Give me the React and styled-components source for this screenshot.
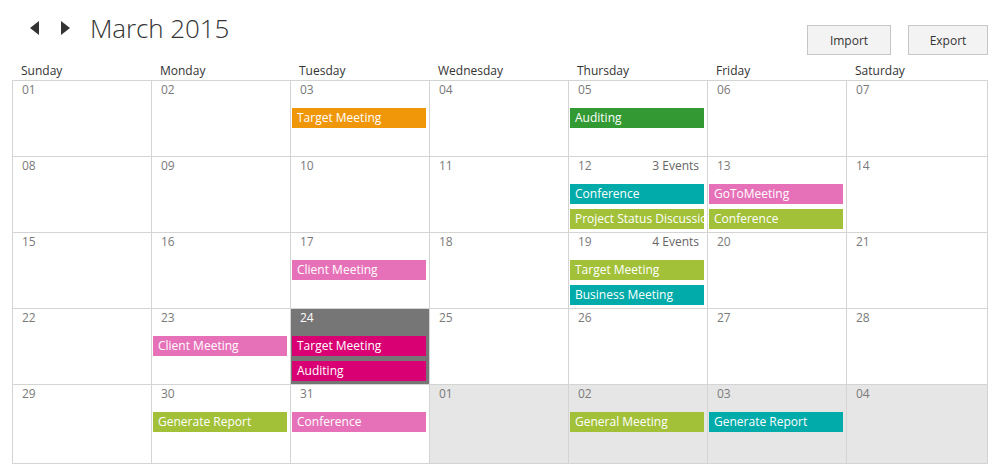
import React from "react"
import styled, { createGlobalStyle } from "styled-components"

const GlobalStyle = createGlobalStyle`
  body {
    margin: 0;
    background: #ffffff;
    font-family: "Open Sans", "Liberation Sans", sans-serif;
  }
`

const colors = {
  orange: "#f09609",
  green: "#339933",
  teal: "#00aba9",
  pink: "#e671b8",
  lime: "#a2c139",
  magenta: "#d80073",
}

const Page = styled.div`
  width: 976px;
  padding-left: 12px;
`

const TopBar = styled.div`
  display: flex;
  justify-content: space-between;
  height: 62px;
`

const TitleBlock = styled.div`
  display: flex;
  align-items: center;
  height: 56px;
  padding-left: 17px;
`

const Arrow = styled.button`
  width: 12px;
  height: 16px;
  padding: 0;
  margin-right: 18px;
  border: none;
  background: none;
  display: flex;
  align-items: center;
  justify-content: center;
  cursor: pointer;
`

const Title = styled.h1`
  margin: 0 0 0 1px;
  font-family: "Open Sans", sans-serif;
  font-weight: 300;
  font-size: 26px;
  letter-spacing: -0.1px;
  color: #333333;
`

const Actions = styled.div`
  display: flex;
  gap: 17px;
  align-self: flex-end;
  margin-bottom: 7px;
`

const Button = styled.button`
  width: ${(p) => p.w}px;
  height: 30px;
  border: 1px solid #c6c6c6;
  background: #f3f3f3;
  color: #333333;
  font-family: "Open Sans", sans-serif;
  font-size: 12px;
  cursor: pointer;
`

const DayNames = styled.div`
  display: grid;
  grid-template-columns: repeat(6, 139px) 1fr;
  height: 18px;
`

const DayName = styled.div`
  padding: 1px 0 0 9px;
  font-size: 12px;
  line-height: 16px;
  color: #333333;
`

const Grid = styled.div`
  display: grid;
  grid-template-columns: repeat(6, 139px) 1fr;
  grid-template-rows: repeat(4, 76px) 79px;
  border-top: 1px solid #d4d4d4;
  border-left: 1px solid #d4d4d4;
`

const Cell = styled.div`
  box-sizing: border-box;
  border-right: 1px solid #d4d4d4;
  border-bottom: 1px solid #d4d4d4;
  background: ${(p) => (p.today ? "#767676" : p.other ? "#e6e6e6" : "#ffffff")};
  overflow: hidden;
`

const CellHead = styled.div`
  display: flex;
  justify-content: space-between;
  height: 27px;
  box-sizing: border-box;
  padding: 1px 8px 0 9px;
  font-size: 12px;
  line-height: 16px;
  color: ${(p) => (p.today ? "#ffffff" : "#7a7a7a")};
`

const More = styled.span`
  color: #666666;
`

const EventList = styled.div`
  display: flex;
  flex-direction: column;
  gap: 5px;
  padding-left: 1px;
`

const Event = styled.div`
  width: 134px;
  height: 20px;
  box-sizing: border-box;
  padding-left: 5px;
  background: ${(p) => p.color};
  color: #ffffff;
  font-size: 12px;
  line-height: 20px;
  white-space: nowrap;
  overflow: hidden;
`

const days = ["Sunday", "Monday", "Tuesday", "Wednesday", "Thursday", "Friday", "Saturday"]

const events = {
  3: [["Target Meeting", colors.orange]],
  5: [["Auditing", colors.green]],
  12: [["Conference", colors.teal], ["Project Status Discussion", colors.lime]],
  13: [["GoToMeeting", colors.pink], ["Conference", colors.lime]],
  17: [["Client Meeting", colors.pink]],
  19: [["Target Meeting", colors.lime], ["Business Meeting", colors.teal]],
  23: [["Client Meeting", colors.pink]],
  24: [["Target Meeting", colors.magenta], ["Auditing", colors.magenta]],
  30: [["Generate Report", colors.lime]],
  31: [["Conference", colors.pink]],
  "n2": [["General Meeting", colors.lime]],
  "n3": [["Generate Report", colors.teal]],
}

const more = { 12: "3 Events", 19: "4 Events" }

const cells = []
for (let d = 1; d <= 31; d++) cells.push({ key: d, label: String(d).padStart(2, "0") })
for (let d = 1; d <= 4; d++) cells.push({ key: "n" + d, label: "0" + d, other: true })

const Triangle = ({ dir }) => (
  <svg width="10" height="14" viewBox="0 0 10 14">
    {dir === "left" ? (
      <path d="M9 0 L9 14 L0 7 Z" fill="#333333" />
    ) : (
      <path d="M1 0 L1 14 L10 7 Z" fill="#333333" />
    )}
  </svg>
)

const App = () => {
  return (
    <Page>
      <GlobalStyle />
      <TopBar>
        <TitleBlock>
          <Arrow aria-label="previous"><Triangle dir="left" /></Arrow>
          <Arrow aria-label="next"><Triangle dir="right" /></Arrow>
          <Title>March 2015</Title>
        </TitleBlock>
        <Actions>
          <Button w={84}>Import</Button>
          <Button w={80}>Export</Button>
        </Actions>
      </TopBar>
      <DayNames>
        {days.map((d) => (
          <DayName key={d}>{d}</DayName>
        ))}
      </DayNames>
      <Grid>
        {cells.map((c) => {
          const today = c.key === 24
          return (
            <Cell key={c.key} today={today} other={c.other}>
              <CellHead today={today}>
                <span>{c.label}</span>
                {more[c.key] && <More>{more[c.key]}</More>}
              </CellHead>
              <EventList>
                {(events[c.key] || []).map(([name, color], i) => (
                  <Event key={i} color={color} title={name}>{name}</Event>
                ))}
              </EventList>
            </Cell>
          )
        })}
      </Grid>
    </Page>
  )
}

export default App
